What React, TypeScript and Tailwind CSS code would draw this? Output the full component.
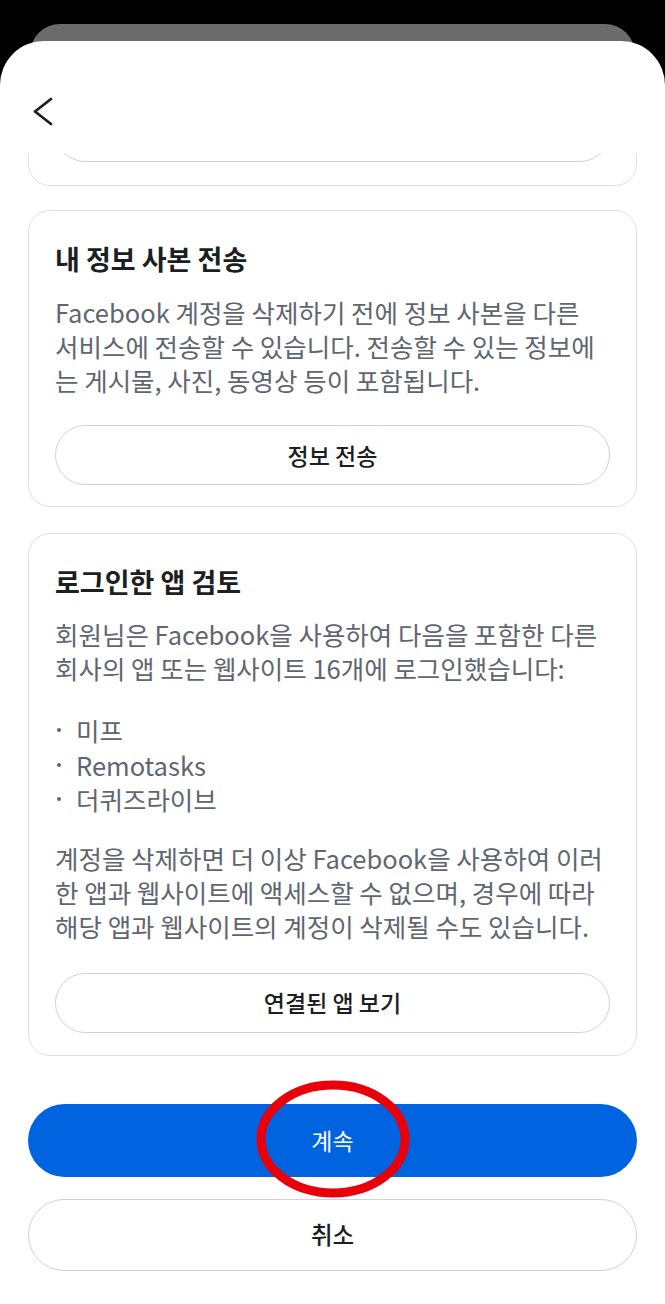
import React from "react";

// ─── Fonts / colours ──────────────────────────────────────────────────────────
const FONT = { fontFamily: '"Noto Sans CJK KR", "Noto Sans", sans-serif' };

const OutlineButton = ({ label }: { label: string }) => (
  <button className="w-full h-[60px] rounded-full border-[1.5px] border-[#cfd2d7] bg-white text-[23px] font-medium text-[#1c1e21]">
    {label}
  </button>
);

const Bullet = ({ children }: { children: React.ReactNode }) => (
  <div className="flex items-center h-[34.5px]">
    <span className="w-[4px] h-[4px] rounded-full bg-[#5f6670] ml-[2px] mr-[15px]" />
    <span>{children}</span>
  </div>
);

// ─── Page ─────────────────────────────────────────────────────────────────────
export default function App() {
  return (
    <div style={FONT} className="w-full h-[1304px] bg-black overflow-hidden">
      {/* sheet stacked behind */}
      <div className="pt-[24px]">
        <div className="mx-[30px] h-[40px] rounded-t-[30px] bg-[#6b6b6b]" />
      </div>

      {/* main sheet */}
      <div className="-mt-[23px] h-[1263px] bg-white rounded-t-[44px] flex flex-col">
        {/* header */}
        <div className="h-[112px] shrink-0 pl-[31px] pt-[55px]">
          <svg width="22" height="32" viewBox="0 0 22 32" fill="none">
            <path d="M20 3 L4 15.5 L20 28" stroke="#1c1e21" strokeWidth="2.8" strokeLinecap="round" strokeLinejoin="round" />
          </svg>
        </div>

        {/* scrolled content */}
        <div className="flex-1 overflow-hidden px-[28px] flex flex-col">
          {/* card scrolled away under header */}
          <div className="-mt-[87px] h-[120px] shrink-0 rounded-[22px] border-[1.5px] border-[#dfe1e5] px-[26px] pb-[23px] flex flex-col justify-end">
            <OutlineButton label="" />
          </div>

          {/* 내 정보 사본 전송 */}
          <div className="mt-[24px] rounded-[22px] border-[1.5px] border-[#dfe1e5] px-[26px] pt-[31px] pb-[21px]">
            <h2 className="text-[27px] leading-[34px] font-bold text-[#1c1e21]">내 정보 사본 전송</h2>
            <p className="mt-[19px] text-[25.5px] leading-[34px] text-[#5f6670] whitespace-nowrap">
              Facebook 계정을 삭제하기 전에 정보 사본을 다른
              <br />
              서비스에 전송할 수 있습니다. 전송할 수 있는 정보에
              <br />
              는 게시물, 사진, 동영상 등이 포함됩니다.
            </p>
            <div className="mt-[28px]">
              <OutlineButton label="정보 전송" />
            </div>
          </div>

          {/* 로그인한 앱 검토 */}
          <div className="mt-[26px] rounded-[22px] border-[1.5px] border-[#dfe1e5] px-[26px] pt-[31px] pb-[22px]">
            <h2 className="text-[27px] leading-[34px] font-bold text-[#1c1e21]">로그인한 앱 검토</h2>
            <p className="mt-[18px] text-[25.5px] leading-[34px] text-[#5f6670] whitespace-nowrap">
              회원님은 Facebook을 사용하여 다음을 포함한 다른
              <br />
              회사의 앱 또는 웹사이트 16개에 로그인했습니다:
            </p>
            <div className="mt-[28px] text-[25.5px] text-[#5f6670]">
              <Bullet>미프</Bullet>
              <Bullet>Remotasks</Bullet>
              <Bullet>더퀴즈라이브</Bullet>
            </div>
            <p className="mt-[24px] text-[25.5px] leading-[34px] text-[#5f6670] whitespace-nowrap">
              계정을 삭제하면 더 이상 Facebook을 사용하여 이러
              <br />
              한 앱과 웹사이트에 액세스할 수 없으며, 경우에 따라
              <br />
              해당 앱과 웹사이트의 계정이 삭제될 수도 있습니다.
            </p>
            <div className="mt-[30px]">
              <OutlineButton label="연결된 앱 보기" />
            </div>
          </div>

          {/* actions */}
          <div className="mt-[48px] relative">
            <button className="w-full h-[73px] rounded-full bg-[#0064e0] text-white text-[23px] font-normal">
              계속
            </button>
            {/* red annotation ring */}
            <svg
              className="absolute left-[228px] -top-[24px] pointer-events-none"
              width="154"
              height="118"
              viewBox="0 0 154 118"
              fill="none"
            >
              <ellipse cx="77" cy="59" rx="72" ry="54" stroke="#e8000b" strokeWidth="9" />
            </svg>
          </div>
          <button className="mt-[22px] w-full h-[72px] shrink-0 rounded-full border-[1.5px] border-[#cfd2d7] bg-white text-[23.5px] font-medium text-[#1c1e21]">
            취소
          </button>
        </div>
      </div>
    </div>
  );
}
